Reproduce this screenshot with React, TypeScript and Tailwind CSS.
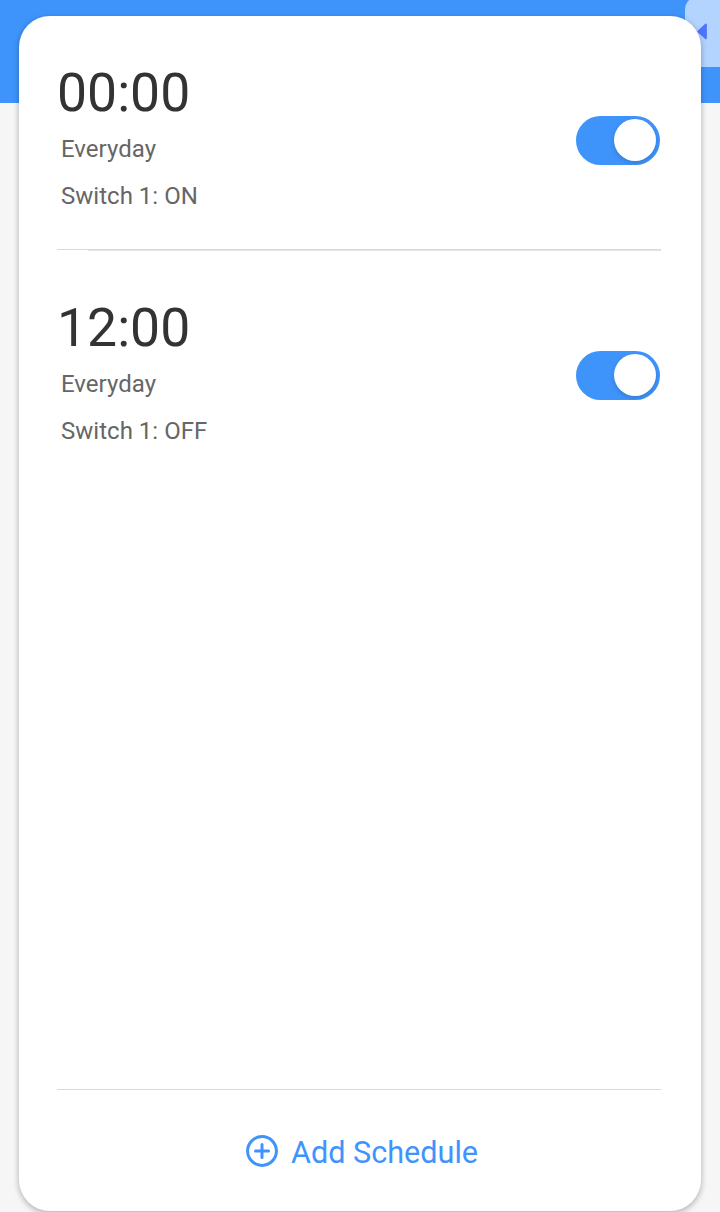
import { useState } from "react";

type Schedule = { time: string; repeat: string; action: string };

const schedules: Schedule[] = [
  { time: "00:00", repeat: "Everyday", action: "Switch 1: ON" },
  { time: "12:00", repeat: "Everyday", action: "Switch 1: OFF" },
];

function Toggle() {
  const [on, setOn] = useState(true);
  return (
    <button
      type="button"
      role="switch"
      aria-checked={on}
      onClick={() => setOn(!on)}
      className={
        on
          ? "flex h-[49px] w-[84px] items-start justify-end rounded-full bg-[#3f94fc] pt-[3px] pr-1 overflow-hidden"
          : "flex h-[49px] w-[84px] items-start justify-start rounded-full bg-[#d4d4d4] pt-[3px] pl-1 overflow-hidden"
      }
    >
      <span className="size-[42px] rounded-full bg-white shadow-[0_2px_5px_rgba(0,0,0,0.18)]" />
    </button>
  );
}

function ScheduleRow({ schedule }: { schedule: Schedule }) {
  return (
    <div className="flex h-[233px] items-start justify-between pr-px">
      <div className="flex flex-col pt-11 text-2xl text-[#666666]">
        <span className="text-[53.5px] leading-[66px] text-[#333333]">{schedule.time}</span>
        <span className="pl-1 leading-[47px] tracking-[0.02px]">{schedule.repeat}</span>
        <span className="pl-1 leading-[47px] tracking-[0.02px]">{schedule.action}</span>
      </div>
      <div className="pt-[100px]">
        <Toggle />
      </div>
    </div>
  );
}

export default function App() {
  return (
    <div className="relative h-[1212px] w-[720px] overflow-hidden bg-[#f6f6f6] font-['Roboto',sans-serif]">
      <div className="absolute inset-x-0 top-0 h-[103px] bg-[#3f94fc]" />
      <div className="absolute top-[-4px] left-[685px] h-[71px] w-[50px] rounded-tl-[14px] bg-[#b2d4fe]">
        <svg className="absolute top-[27px] left-[12px]" width="11" height="17" viewBox="0 0 11 17">
          <path
            d="M1.4 8.4 8.9 1.6 8.9 15.2Z"
            fill="#4f74fd"
            stroke="#4f74fd"
            strokeWidth="2"
            strokeLinejoin="round"
          />
        </svg>
      </div>
      <main className="relative mx-[19px] mt-4 flex h-[1195px] flex-col rounded-[31px] bg-white pr-10 pl-[38px] shadow-[0_2px_6px_rgba(0,0,0,0.3)]">
        <section className="flex flex-1 flex-col">
          <ScheduleRow schedule={schedules[0]} />
          <div className="h-px bg-[#dadada]" />
          <div className="ml-[31px] h-px bg-[#e4e4e4]" />
          <ScheduleRow schedule={schedules[1]} />
        </section>
        <button
          type="button"
          className="flex h-[122px] items-center justify-center gap-[13px] border-t border-[#dadada] pl-1.5 text-[30.6px] text-[#3f94fc]"
        >
          <svg width="32" height="32" viewBox="0 0 32 32" fill="none" stroke="currentColor" strokeWidth="3">
            <circle cx="16" cy="16" r="14.4" />
            <path d="M16 9.5v13M9.5 16h13" strokeLinecap="round" />
          </svg>
          <span className="pt-1 leading-[40px]">Add Schedule</span>
        </button>
      </main>
    </div>
  );
}
